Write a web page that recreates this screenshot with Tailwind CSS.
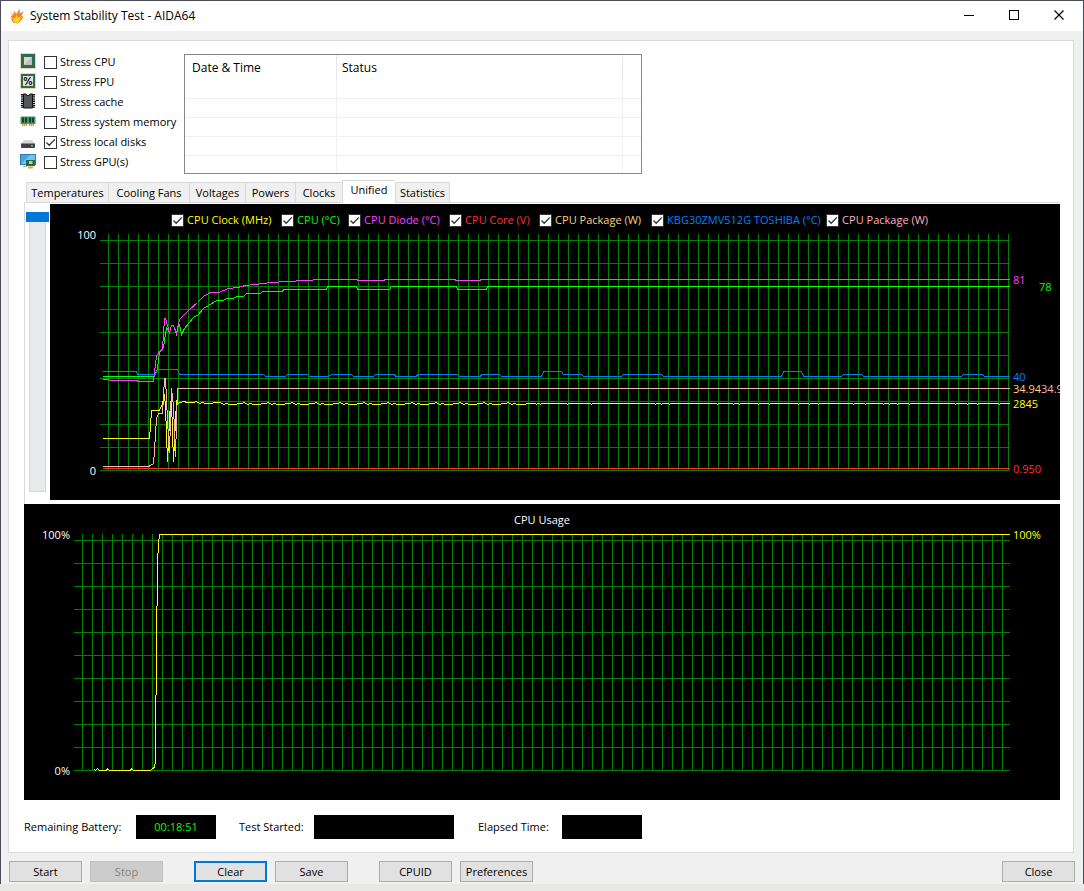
<!DOCTYPE html>
<html lang="en">
<head>
  <meta charset="UTF-8">
  <title>System Stability Test - AIDA64</title>
  <script src="https://cdn.jsdelivr.net/npm/@tailwindcss/browser@4"></script>
</head>
<body class="bg-[#e8e8e6] text-black text-[11px] leading-4 font-['Segoe_UI','Open_Sans',sans-serif]">

  <svg class="hidden">
    <symbol id="tick" viewBox="0 0 13 13">
      <path d="M2.5 6.5 L5.2 9.2 L10.8 3.4" fill="none" stroke="#333" stroke-width="1.3"/>
    </symbol>
  </svg>

  <div class="bg-[#f0f0f0] border border-b-0 border-[#4a4d55] pb-0.5">
    <!-- title bar -->
    <header class="bg-white h-[30px] flex items-center pl-2 pr-4">
      <svg class="w-4 h-4" viewBox="0 0 16 16">
        <path d="M1 3.5 L4 7.5 L5 3 L7.5 6 L10.5 0.5 L11 5.5 L14.500 3 L12.500 8 L14.500 8.500 L12.500 12 L9 15.500 L4 14.500 L2 11 L3 9.500 L1.500 8 L3.200 7.800 Z" fill="#f0862a"/>
        <path d="M3.500 10 L6 10.500 L7.500 7 L9 10 L12 8 L11 12 L8.500 15 L5 14 Z" fill="#ffd429"/>
      </svg>
      <h1 class="ml-[5px] text-[12px]">System Stability Test - AIDA64</h1>
      <div class="ml-auto flex gap-[29px]">
        <button aria-label="Minimize" class="w-4 h-4"><svg class="w-4 h-4" viewBox="0 0 16 16"><path d="M3 7.5H13" stroke="#000"/></svg></button>
        <button aria-label="Maximize" class="w-4 h-4"><svg class="w-4 h-4" viewBox="0 0 16 16"><rect x="3.5" y="2.5" width="9" height="9" fill="none" stroke="#000"/></svg></button>
        <button aria-label="Close window" class="w-4 h-4"><svg class="w-4 h-4" viewBox="0 0 16 16"><path d="M3.500 2.500L12.500 11.500M12.500 2.500L3.500 11.500" stroke="#000" stroke-width="1.2"/></svg></button>
      </div>
    </header>

    <main class="bg-white border border-[#dcdcdc] mt-[9px] ml-[7px] mr-[9px] pt-[11px] pb-[13px] pl-[15px] pr-[13px]">
      <div class="flex -ml-1">
        <!-- stress options -->
        <div class="w-[164px] whitespace-nowrap">
          <div class="h-5 flex items-center">
            <svg class="w-4 h-4 shrink-0 mr-2 -mt-0.5" viewBox="0 0 16 16">
              <rect x=".5" y=".5" width="15" height="15" fill="none" stroke="#c9b26a" stroke-dasharray="1 1"/>
              <rect x="1" y="1" width="14" height="14" fill="#2f6b4c"/><rect x="4" y="4" width="8" height="8" fill="#d5d8d5"/><path d="M4 12L12 4V12Z" fill="#bcc0bc"/>
            </svg>
            <label class="flex items-center gap-[3px]"><span class="grid"><input type="checkbox" class="peer appearance-none col-start-1 row-start-1 w-[13px] h-[13px] bg-white border border-[#333]"><svg class="invisible peer-checked:visible pointer-events-none col-start-1 row-start-1 w-[13px] h-[13px]"><use href="#tick"/></svg></span>Stress CPU</label>
          </div>
          <div class="h-5 flex items-center">
            <svg class="w-4 h-4 shrink-0 mr-2 -mt-0.5" viewBox="0 0 16 16">
              <rect x=".5" y=".5" width="15" height="15" fill="none" stroke="#c9b26a" stroke-dasharray="1 1"/>
              <rect x="1" y="1" width="14" height="14" fill="#2f6b4c"/><rect x="3" y="3" width="10" height="10" fill="#dfe2df"/>
              <path d="M10.5 4L5.5 12" stroke="#222" stroke-width="1.2"/><circle cx="5.5" cy="6" r="1.4" fill="none" stroke="#222" stroke-width="1.1"/><circle cx="10.5" cy="10" r="1.4" fill="none" stroke="#222" stroke-width="1.1"/>
            </svg>
            <label class="flex items-center gap-[3px]"><span class="grid"><input type="checkbox" class="peer appearance-none col-start-1 row-start-1 w-[13px] h-[13px] bg-white border border-[#333]"><svg class="invisible peer-checked:visible pointer-events-none col-start-1 row-start-1 w-[13px] h-[13px]"><use href="#tick"/></svg></span>Stress FPU</label>
          </div>
          <div class="h-5 flex items-center">
            <svg class="w-4 h-4 shrink-0 mr-2 -mt-0.5" viewBox="0 0 16 16">
              <path d="M2.5 1V15M13.5 1V15" stroke="#111" stroke-width="3" stroke-dasharray="1.4 .8"/>
              <path d="M3.5 1H6L7 2.5H9L10 1H12.5V15H3.5Z" fill="#50565a" stroke="#111"/>
            </svg>
            <label class="flex items-center gap-[3px]"><span class="grid"><input type="checkbox" class="peer appearance-none col-start-1 row-start-1 w-[13px] h-[13px] bg-white border border-[#333]"><svg class="invisible peer-checked:visible pointer-events-none col-start-1 row-start-1 w-[13px] h-[13px]"><use href="#tick"/></svg></span>Stress cache</label>
          </div>
          <div class="h-5 flex items-center">
            <svg class="w-4 h-4 shrink-0 mr-2 -mt-0.5" viewBox="0 0 16 16">
              <path d="M0.5 3.5H15.5V11H0.5Z" fill="#3d9b6a"/><path d="M2 4.5h2v5H2zM5 4.5h2v5H5zM9 4.5h2v5H9zM12 4.5h2v5h-2z" fill="#23382e"/>
              <path d="M2 12H7M9 12H14" stroke="#d9963a" stroke-width="2" stroke-dasharray="1.5 .5"/>
            </svg>
            <label class="flex items-center gap-[3px]"><span class="grid"><input type="checkbox" class="peer appearance-none col-start-1 row-start-1 w-[13px] h-[13px] bg-white border border-[#333]"><svg class="invisible peer-checked:visible pointer-events-none col-start-1 row-start-1 w-[13px] h-[13px]"><use href="#tick"/></svg></span>Stress system memory</label>
          </div>
          <div class="h-5 flex items-center">
            <svg class="w-4 h-4 shrink-0 mr-2 -mt-0.5" viewBox="0 0 16 16">
              <path d="M4 7H12L14.5 10H1.5Z" fill="#d3d5d6"/><rect x="1" y="10" width="14" height="5" rx="1" fill="#3f4244"/><rect x="1" y="10" width="14" height="1" fill="#8a8d8f"/><rect x="11" y="12" width="2" height="1.5" fill="#3fe03f"/>
            </svg>
            <label class="flex items-center gap-[3px]"><span class="grid"><input type="checkbox" checked class="peer appearance-none col-start-1 row-start-1 w-[13px] h-[13px] bg-white border border-[#333]"><svg class="invisible peer-checked:visible pointer-events-none col-start-1 row-start-1 w-[13px] h-[13px]"><use href="#tick"/></svg></span>Stress local disks</label>
          </div>
          <div class="h-5 flex items-center">
            <svg class="w-4 h-4 shrink-0 mr-2 -mt-0.5" viewBox="0 0 16 16">
              <rect x=".5" y="1.5" width="15" height="10" fill="#3fa9e8" stroke="#3779a5"/><path d="M1 11L10 2H15V11Z" fill="#6cc4f5"/><path d="M3 13.5H7" stroke="#9aa" />
              <rect x="6" y="7" width="9" height="6" fill="#256b45"/><rect x="9" y="8" width="3.5" height="3" fill="#b9c7bd"/><path d="M8 14.5H13" stroke="#f0a020" stroke-width="2"/>
            </svg>
            <label class="flex items-center gap-[3px]"><span class="grid"><input type="checkbox" class="peer appearance-none col-start-1 row-start-1 w-[13px] h-[13px] bg-white border border-[#333]"><svg class="invisible peer-checked:visible pointer-events-none col-start-1 row-start-1 w-[13px] h-[13px]"><use href="#tick"/></svg></span>Stress GPU(s)</label>
          </div>
        </div>

        <!-- event log -->
        <div class="mt-0.5 w-[458px] h-[120px] border border-[#828790] overflow-hidden text-[12px]">
          <table class="w-full table-fixed border-separate border-spacing-0 [&_td]:border-[#f0f0f0] [&_td]:border-b [&_td]:h-[19px] [&_td]:p-0">
            <colgroup><col class="w-[152px]"><col class="w-[286px]"><col></colgroup>
            <thead>
              <tr class="h-[25px] text-left">
                <th class="font-normal p-0 pl-[7px] border-r border-[#e5e5e5]">Date &amp; Time</th>
                <th class="font-normal p-0 pl-[5px] border-r border-[#e5e5e5]">Status</th>
                <th class="p-0"></th>
              </tr>
            </thead>
            <tbody>
              <tr><td class="border-r"></td><td class="border-r"></td><td></td></tr>
              <tr><td class="border-r"></td><td class="border-r"></td><td></td></tr>
              <tr><td class="border-r"></td><td class="border-r"></td><td></td></tr>
              <tr><td class="border-r"></td><td class="border-r"></td><td></td></tr>
              <tr><td class="border-r"></td><td class="border-r"></td><td></td></tr>
            </tbody>
          </table>
        </div>
      </div>

      <!-- tabs -->
      <nav class="mt-1.5 ml-0.5 h-[22px] grid grid-cols-[82px_81px_56px_50px_47px_53px_55px] items-end whitespace-nowrap">
        <button class="h-5 bg-[#f0f0f0] border-t border-l border-[#d9d9d9]">Temperatures</button>
        <button class="h-5 bg-[#f0f0f0] border-t border-l border-[#d9d9d9]">Cooling Fans</button>
        <button class="h-5 bg-[#f0f0f0] border-t border-l border-[#d9d9d9]">Voltages</button>
        <button class="h-5 bg-[#f0f0f0] border-t border-l border-[#d9d9d9]">Powers</button>
        <button class="h-5 bg-[#f0f0f0] border-t border-l border-[#d9d9d9]">Clocks</button>
        <button class="h-[23px] -mb-px pb-1 relative z-10 bg-white border-t border-l border-[#d9d9d9]">Unified</button>
        <button class="h-5 bg-[#f0f0f0] border-t border-x border-[#d9d9d9]">Statistics</button>
      </nav>

      <section class="flex border-t border-l border-[#d9d9d9] pt-px pb-1">
        <div class="w-[25px] shrink-0 pt-2 pl-px">
          <input type="range" min="0" max="100" value="0" aria-label="Time scale" class="block appearance-none [writing-mode:vertical-lr] w-[23px] h-[280px] bg-transparent [&::-webkit-slider-runnable-track]:w-[17px] [&::-webkit-slider-runnable-track]:h-[280px] [&::-webkit-slider-runnable-track]:bg-[#e7eaea] [&::-webkit-slider-runnable-track]:border [&::-webkit-slider-runnable-track]:border-[#d6d6d6] [&::-webkit-slider-thumb]:appearance-none [&::-webkit-slider-thumb]:w-[23px] [&::-webkit-slider-thumb]:h-[10px] [&::-webkit-slider-thumb]:-ml-[4px] [&::-webkit-slider-thumb]:-mt-px [&::-webkit-slider-thumb]:bg-[#0078d7]">
        </div>
        <div class="grow bg-black grid">
          <svg class="col-start-1 row-start-1 w-full h-auto" id="sensors" viewBox="50 204 1010 296"></svg>
          <div class="col-start-1 row-start-1 self-start mt-2 ml-[11%] pl-2.5 grid grid-cols-[110px_67px_101px_90px_112px_175px_102px] whitespace-nowrap" id="legend"></div>
        </div>
      </section>

      <svg class="w-full h-auto bg-black" id="usage" viewBox="24 504 1036 296"></svg>

      <!-- battery / timers -->
      <div class="mt-[15px] flex items-center">
        <span class="w-[112px]">Remaining Battery:</span>
        <output class="w-20 h-6 bg-black text-[#00ff00] leading-6 text-center">00:18:51</output>
        <span class="ml-[23px] w-[75px]">Test Started:</span>
        <output class="w-[140px] h-6 bg-black"></output>
        <span class="ml-6 w-[84px]">Elapsed Time:</span>
        <output class="w-20 h-6 bg-black"></output>
      </div>
    </main>

    <footer class="mt-2 mx-2 flex gap-2 [&>button]:w-[73px] [&>button]:h-[21px] [&>button]:border">
      <button class="bg-[#e1e1e1] border-[#adadad]">Start</button>
      <button disabled class="bg-[#cccccc] border-[#bfbfbf] text-[#838383]">Stop</button>
      <button class="ml-[23px] bg-[#e1e1e1] border-[#0078d7] outline outline-[#0078d7] -outline-offset-2">Clear</button>
      <button class="bg-[#e1e1e1] border-[#adadad]">Save</button>
      <button class="ml-[23px] bg-[#e1e1e1] border-[#adadad]">CPUID</button>
      <button class="bg-[#e1e1e1] border-[#adadad]">Preferences</button>
      <button class="ml-auto bg-[#e1e1e1] border-[#adadad]">Close</button>
    </footer>
  </div>

  <script>
    const legend = [
      ['CPU Clock (MHz)', '#ffff00'],
      ['CPU (°C)', '#00ff00'],
      ['CPU Diode (°C)', '#ff40ff'],
      ['CPU Core (V)', '#ff3030'],
      ['CPU Package (W)', '#ffd080'],
      ['KBG30ZMV512G TOSHIBA (°C)', '#0080ff'],
      ['CPU Package (W)', '#ffb0c0'],
    ];
    document.getElementById('legend').innerHTML = legend.map(([name, color]) => `
      <label class="flex items-center gap-[3px]" style="color:${color}"><span class="grid"><input type="checkbox" checked class="peer appearance-none col-start-1 row-start-1 w-[13px] h-[13px] bg-white border border-[#333]"><svg class="invisible peer-checked:visible pointer-events-none col-start-1 row-start-1 w-[13px] h-[13px]"><use href="#tick"/></svg></span>${name}</label>`).join('');

    // grid starts 50px from the left edge of each chart, columns every 10px, rows every 23px
    function grid(left, top, right) {
      let d = '';
      for (let x = left + 58; x < right; x += 10) d += `M${x} ${top + 29.5}V${top + 266.5}`;
      for (let y = top + 36; y <= top + 266; y += 23) d += `M${left + 49.5} ${y}H${right - 0.5}`;
      return `<path d="${d}" fill="none" stroke="#008000"/>`;
    }
    const line = (color, points) => `<polyline points="${points}" fill="none" stroke="${color}"/>`;
    const text = (x, y, color, value, anchor = 'start') => `<text x="${x}" y="${y}" fill="${color}" text-anchor="${anchor}">${value}</text>`;

    // clock jitter until x=518, then a flat line with short dips
    const jitter = [0, -1, 1, 0, 1, 0, 2, 0, -1, 0, 1, 1, 0, 2, -1, 0, 1, 1, 0];
    let clock = '102,438 149,438 150,425 151,410 159,410 162,403 164,394 165,407 167,461 170,401 171,401 173,461 176,401 177,403 183,401 187,402';
    for (let x = 190, i = 0; x < 518; x += 3, i++) clock += ` ${x},${(x < 220 ? 402 : 403) + jitter[(i * 7 + (i >> 3)) % jitter.length]}`;
    for (const x of [536, 540, 567, 591, 655, 661, 669, 717, 733, 739, 758, 769, 798, 809, 818, 853, 865, 883, 889, 897, 909, 955, 967, 977, 999]) clock += ` ${x - 1},403 ${x},404 ${x + 1},403`;
    clock += ' 1009,403';

    document.getElementById('sensors').innerHTML = `
      <g transform="translate(.5 .5)" shape-rendering="crispEdges">
        ${grid(50, 204, 1010)}
        ${line('#ffff00', clock)}
        ${line('#00ff00', '102,376 154,376 157,368 159,352 163,347 166,327 169,332 171,325 173,325 176,334 178,324 179,324 181,334 184,328 193,317 198,314 203,308 208,305 216,300 223,300 226,298 233,298 236,296 243,296 246,293 260,293 262,291 282,291 283,289 326,289 327,286 356,286 357,289 389,289 391,286 456,286 457,289 486,289 487,286 1009,286')}
        ${line('#ff40ff', '102,379 108,379 109,380 136,380 138,381 153,381 156,355 162,348 164,318 165,318 167,325 169,332 171,325 173,325 176,333 179,319 188,310 197,302 203,296 210,292 218,292 228,288 237,287 245,285 255,284 270,282 287,281 305,280 320,279 356,279 358,280 383,280 385,279 454,279 456,280 479,280 481,279 1009,279')}
        ${line('#ff3030', '102,468 1009,468')}
        ${line('#0080ff', '102,371 136,371 137,374 155,374 157,369 177,369 179,374 263,374 265,376 285,376 287,374 307,374 309,376 328,376 331,374 351,374 353,376 373,376 375,374 394,374 395,376 416,376 417,374 457,374 459,376 480,376 481,374 499,374 501,376 541,376 543,371 561,371 563,374 581,374 583,376 621,376 623,374 661,374 663,376 781,376 783,371 801,371 803,376 841,376 843,374 861,374 863,376 961,376 963,374 982,374 984,376 1009,376')}
        ${line('#ffb0c0', '102,466 148,466 150,465 153,463 154,450 156,418 158,413 162,413 164,378 165,378 167,420 169,452 171,388 173,406 175,456 177,388 1009,388')}
      </g>
      ${text(96, 239, '#fff', '100', 'end')}
      ${text(96, 475, '#fff', '0', 'end')}
      ${text(1013, 284, '#ff40ff', '81')}
      ${text(1039, 291, '#00ff00', '78')}
      ${text(1013, 381, '#0080ff', '40')}
      ${text(1013, 393, '#ffd080', '34.94<tspan fill="#ffb0c0">34.9</tspan>')}
      ${text(1013, 408, '#ffff00', '2845')}
      ${text(1013, 473, '#ff3030', '0.950')}`;

    document.getElementById('usage').innerHTML = `
      <g transform="translate(.5 .5)" shape-rendering="crispEdges">
        ${grid(24, 504, 1010)}
        ${line('#ffff00', '94,769 95,770 97,768 99,770 106,770 107,768 109,770 130,770 131,768 133,770 150,770 152,768 154,767 155,760 155,740 157,562 158,543 159,534 1009,534')}
      </g>
      ${text(542, 524, '#fff', 'CPU Usage', 'middle')}
      ${text(70, 539, '#fff', '100%', 'end')}
      ${text(70, 775, '#fff', '0%', 'end')}
      ${text(1013, 539, '#ffff00', '100%')}`;
  </script>
</body>
</html>
